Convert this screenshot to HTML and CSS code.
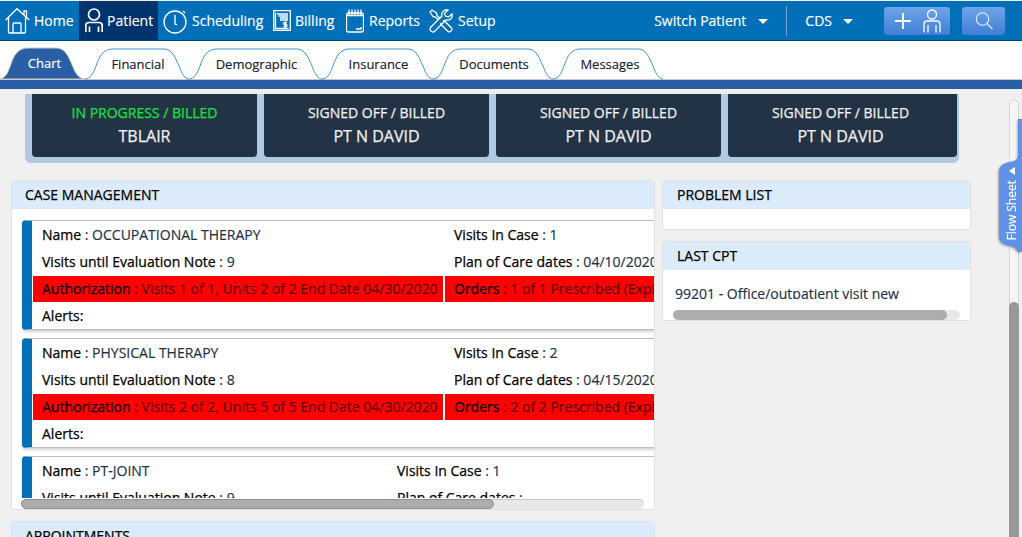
FILE: index.html
```html
<!DOCTYPE html>
<html lang="en">
<head>
<meta charset="utf-8">
<title>Patient Chart</title>
<link rel="stylesheet" href="styles.css">
</head>
<body>
<header class="topbar">
  <nav class="nav">
    <a class="nav-item nav-home">
      <svg class="ico" width="25" height="26" viewBox="0 0 25 26"><path d="M.7 12 12 .7 24.300 12M3.500 9.500V24q0 1 1 1H19.500q1 0 1-1V9.500M8 25V16q0-1 1-1h6q1 0 1 1v9M19 7V3h2.500v6.500"/></svg>
      <span>Home</span>
    </a>
    <a class="nav-item nav-patient active">
      <svg class="ico ico-bold" width="18" height="25" viewBox="0 0 18 25"><circle cx="9" cy="6.500" r="5.500"/><path d="M.8 24V17.500Q.8 14.500 4 14.500H14Q17.200 14.500 17.200 17.500V24M4.500 18.500V24M13.500 18.500V24"/></svg>
      <span>Patient</span>
    </a>
    <a class="nav-item nav-sched">
      <svg class="ico" width="24" height="26" viewBox="0 0 24 26"><circle cx="12" cy="14" r="11"/><path d="M12 7v9l2 1M20 3l2 2"/></svg>
      <span>Scheduling</span>
    </a>
    <a class="nav-item nav-bill">
      <svg class="ico" width="18" height="21" viewBox="0 0 18 21"><path d="M.7.7h16.600v19.600H.7zM2.500 2.500v16h13M4 4h11M5.500 6h9.500M7 8h8M7 10h8M14 12.500h-2.500q-1 0-1 1t1 1h1.500q1 0 1 1t-1 1h-2.500M12.500 11.500v6.500"/></svg>
      <span>Billing</span>
    </a>
    <a class="nav-item nav-rep">
      <svg class="ico" width="18" height="24" viewBox="0 0 18 24"><path d="M2.500 4H15.500q2 0 2 2v15q0 2-2 2H2.500q-2 0-2-2V6q0-2 2-2zM3 .5V6M6 .5V6M9 .5V6M12 .5V6M15 .5V6M.5 6.500h17M10 20h5V18"/></svg>
      <span>Reports</span>
    </a>
    <a class="nav-item nav-setup">
      <svg class="ico" width="24" height="24" viewBox="0 0 24 24"><path d="M9.500 11 6.500 8 4 7.500 1 3 3 1 7.500 4 8 6.500l3 3M14 12.500l1-1 7.500 7.500q1 1.500-.5 3t-3 .5L11.500 15l1-1"/><path d="M23 5l-3.500 3-3-1-1-2.500L19 1c-3.500-1-7 2-6 6L1.500 18.500q-1 1.500 0 3l1 1q1.500 1 3 0L17 11c4 1 7-2 6-6z"/></svg>
      <span>Setup</span>
    </a>
  </nav>
  <div class="actions">
    <a class="drop drop-switch">Switch Patient<i class="caret"></i></a>
    <i class="vsep"></i>
    <a class="drop drop-cds">CDS<i class="caret"></i></a>
    <button class="tool tool-add">
      <svg class="ico" width="18" height="18" viewBox="0 0 18 18"><path class="thick" d="M9 1v16M1 9h16"/></svg>
      <svg class="ico" width="18" height="24" viewBox="0 0 18 24"><circle cx="9" cy="5.500" r="4.500"/><path d="M1 23.500V15q0-3 3-3h10q3 0 3 3v8.500M5 16v7.500M13 16v7.500"/></svg>
    </button>
    <button class="tool tool-search">
      <svg class="ico ico-thin" width="20" height="20" viewBox="0 0 20 20"><circle cx="8.500" cy="8" r="6.200"/><path d="m13 12.500 5.500 5.500"/></svg>
    </button>
  </div>
</header>

<div class="tabs">
  <a class="tab tab-chart active">
    <svg class="tab-shape" width="85" height="31" viewBox="0 0 85 31"><path d="M0 31C6 30 8 24 11 16 14 7 18 0 28 0H56C66 0 69 10 73 19 76 27 80 31 85 31Z"/></svg>
    <span>Chart</span>
  </a>
  <a class="tab tab-fin">
    <svg class="tab-shape" width="104" height="30" viewBox="0 0 104 30"><path d="M0 30C5 30 8 25 11 17 14 8 18 0 27 0H79C87 0 90 8 94 17 97 25 100 30 104 30"/></svg>
    <span>Financial</span>
  </a>
  <a class="tab tab-demo">
    <svg class="tab-shape" width="133" height="30" viewBox="0 0 133 30"><path d="M0 30C5 30 8 25 11 17 14 8 18 0 27 0H108C116 0 119 8 123 17 126 25 129 30 133 30"/></svg>
    <span>Demographic</span>
  </a>
  <a class="tab tab-ins">
    <svg class="tab-shape" width="111" height="30" viewBox="0 0 111 30"><path d="M0 30C5 30 8 25 11 17 14 8 18 0 27 0H86C94 0 97 8 101 17 104 25 107 30 111 30"/></svg>
    <span>Insurance</span>
  </a>
  <a class="tab tab-doc">
    <svg class="tab-shape" width="120" height="30" viewBox="0 0 120 30"><path d="M0 30C5 30 8 25 11 17 14 8 18 0 27 0H95C103 0 106 8 110 17 113 25 116 30 120 30"/></svg>
    <span>Documents</span>
  </a>
  <a class="tab tab-msg">
    <svg class="tab-shape" width="110" height="30" viewBox="0 0 110 30"><path d="M0 30C5 30 8 25 11 17 14 8 18 0 27 0H85C93 0 96 8 100 17 103 25 106 30 110 30"/></svg>
    <span>Messages</span>
  </a>
</div>
<div class="tab-band"></div>

<div class="workspace">
  <main class="main">
    <section class="encounters">
      <article class="enc enc-first">
        <div class="enc-status enc-green">IN PROGRESS / BILLED</div>
        <div class="enc-name">TBLAIR</div>
      </article>
      <article class="enc">
        <div class="enc-status">SIGNED OFF / BILLED</div>
        <div class="enc-name">PT N DAVID</div>
      </article>
      <article class="enc">
        <div class="enc-status">SIGNED OFF / BILLED</div>
        <div class="enc-name">PT N DAVID</div>
      </article>
      <article class="enc enc-last">
        <div class="enc-status">SIGNED OFF / BILLED</div>
        <div class="enc-name">PT N DAVID</div>
      </article>
    </section>

    <div class="columns">
      <div class="col-left">
        <section class="panel panel-case">
          <h2 class="panel-head">CASE MANAGEMENT</h2>
          <div class="case-scroll">
            <div class="case-card">
              <div class="case-grid">
                <div class="cell"><b>Name</b> : OCCUPATIONAL THERAPY</div>
                <div class="cell"><b>Visits In Case</b> : 1</div>
                <div class="cell"><b>Visits until Evaluation Note</b> : 9</div>
                <div class="cell"><b>Plan of Care dates</b> : 04/10/2020 - 05/10/2020</div>
                <div class="cell cell-red"><b>Authorization</b> : Visits 1 of 1, Units 2 of 2 End Date 04/30/2020</div>
                <div class="cell cell-red"><b>Orders</b> : 1 of 1 Prescribed (Expires 05/10/2020)</div>
                <div class="cell"><b>Alerts:</b></div>
                <div class="cell"></div>
              </div>
            </div>
            <div class="case-card">
              <div class="case-grid">
                <div class="cell"><b>Name</b> : PHYSICAL THERAPY</div>
                <div class="cell"><b>Visits In Case</b> : 2</div>
                <div class="cell"><b>Visits until Evaluation Note</b> : 8</div>
                <div class="cell"><b>Plan of Care dates</b> : 04/15/2020 - 05/15/2020</div>
                <div class="cell cell-red"><b>Authorization</b> : Visits 2 of 2, Units 5 of 5 End Date 04/30/2020</div>
                <div class="cell cell-red"><b>Orders</b> : 2 of 2 Prescribed (Expires 05/15/2020)</div>
                <div class="cell"><b>Alerts:</b></div>
                <div class="cell"></div>
              </div>
            </div>
            <div class="case-card">
              <div class="case-grid case-grid-short">
                <div class="cell"><b>Name</b> : PT-JOINT</div>
                <div class="cell"><b>Visits In Case</b> : 1</div>
                <div class="cell"><b>Visits until Evaluation Note</b> : 9</div>
                <div class="cell"><b>Plan of Care dates</b> :</div>
              </div>
            </div>
          </div>
          <div class="hscroll hscroll-case"><i class="hthumb"></i></div>
        </section>
        <section class="panel panel-appt">
          <h2 class="panel-head">APPOINTMENTS</h2>
        </section>
      </div>

      <div class="col-right">
        <section class="panel panel-problem">
          <h2 class="panel-head panel-head-wide">PROBLEM LIST</h2>
        </section>
        <section class="panel panel-cpt">
          <h2 class="panel-head panel-head-wide">LAST CPT</h2>
          <div class="cpt-body"><div class="cpt-text">99201 - Office/outpatient visit new</div></div>
          <div class="hscroll hscroll-cpt"><i class="hthumb"></i></div>
        </section>
      </div>
    </div>
  </main>
  <aside class="rail"><div class="rail-track"><i class="rail-thumb"></i></div></aside>
  <a class="flow-tab">
    <svg class="flow-shape" width="24" height="133" viewBox="0 0 24 133"><path d="M24 0H20V36C20 41 17 42 12 43 5 44 1 47 1 53V117C1 123 5 126 12 127 17 128 19 131 20 133H24Z"/></svg>
    <i class="flow-arrow"></i>
    <span>Flow Sheet</span>
  </a>
</div>
</body>
</html>
```
FILE: styles.css
```css
* { box-sizing: border-box; }
html, body { margin: 0; height: 100%; overflow: hidden; }
body {
  width: 1022px;
  height: 537px;
  background: #f0f0f0;
  font-family: "Open Sans", "Liberation Sans", sans-serif;
  display: flex;
  flex-direction: column;
  color: #10202f;
  -webkit-text-stroke-width: .15px;
}
a { color: inherit; text-decoration: none; }

.ico { fill: none; stroke: #fff; stroke-width: 1.3; flex: none; display: block; }
.ico-bold { stroke-width: 1.7; }
.ico-thin { stroke-width: 1.1; stroke: #e6effb; }
.thick { stroke-width: 2; }

/* top bar */
.topbar {
  flex: none;
  height: 40px;
  margin-top: 1px;
  background: #0270b9;
  border-bottom: 1px solid #04406e;
  display: flex;
  justify-content: space-between;
  color: #fff;
  font-size: 14px;
}
.nav { display: flex; }
.nav-item { display: flex; align-items: center; height: 39px; }
.nav-home { width: 79px; padding-left: 5px; gap: 4px; }
.nav-patient { width: 79px; padding-left: 6px; gap: 4px; }
.nav-patient.active { background: #01346f; }
.nav-sched { width: 110px; padding-left: 5px; gap: 5px; }
.nav-bill { width: 73px; padding-left: 5px; gap: 4px; }
.nav-rep { width: 83px; padding-left: 5px; gap: 5px; }
.nav-setup { padding-left: 5px; gap: 5px; }

.actions { display: flex; align-items: center; height: 39px; padding-right: 17px; }
.drop { display: flex; align-items: center; }
.drop-switch { gap: 12px; }
.drop-cds { gap: 11px; margin-left: 18px; margin-right: 31px; }
.caret {
  width: 0; height: 0;
  border-left: 5px solid transparent;
  border-right: 5px solid transparent;
  border-top: 5px solid #fff;
  margin-top: 1px;
}
.vsep { width: 1px; height: 30px; background: #6fa8d6; margin-left: 18px; }
.tool {
  height: 28px;
  border: 0;
  border-radius: 3px;
  background: linear-gradient(#6ea4e8, #3f7fd6);
  display: flex;
  align-items: center;
  justify-content: center;
  padding: 0;
}
.tool-add { width: 66px; gap: 11px; margin-right: 12px; }
.tool-search { width: 43px; }

/* tabs */
.tabs {
  flex: none;
  height: 38px;
  background: #fff;
  display: flex;
  align-items: flex-end;
  font-size: 13px;
}
.tab {
  position: relative;
  height: 31px;
  display: flex;
  align-items: flex-start;
  justify-content: center;
  padding: 7px 0 0 2px;
}
.tab span { position: relative; }
.tab-shape { position: absolute; left: 0; bottom: 0; overflow: visible; fill: none; stroke: #3f93d3; stroke-width: 1; }
.tab-chart { width: 85px; color: #fff; padding: 6px 0 0 4px; }
.tab-chart .tab-shape { fill: #2a5fa5; stroke: #c9c9c9; }
.tab-fin { width: 104px; }
.tab-demo { width: 133px; }
.tab-ins { width: 111px; }
.tab-doc { width: 120px; }
.tab-msg { width: 110px; padding-left: 4px; }
.tab-band {
  flex: none;
  height: 10px;
  background: #2a5fa5;
  border-top: 1px solid #c9c9c9;
}

/* workspace */
.workspace {
  flex: 1;
  min-height: 0;
  position: relative;
  display: flex;
  overflow: hidden;
}
.main { flex: 1; min-width: 0; padding: 5px 0 0 11px; }

.encounters {
  margin: 0 0 0 14px;
  width: 934px;
  height: 69px;
  background: #b0c8e0;
  border-radius: 0 0 6px 6px;
  padding: 0 2px 6px 7px;
  display: flex;
  gap: 7px;
}
.enc {
  width: 225px;
  height: 63px;
  background: #233346;
  border-radius: 0 0 4px 4px;
  color: #f0f0f0;
  text-align: center;
  padding-top: 9px;
  -webkit-text-stroke-width: .25px;
}
.enc-last { width: 229px; padding-right: 4px; }
.enc-status { font-size: 14px; line-height: 20px; }
.enc-green { color: #17e03c; }
.enc-name { font-size: 16px; line-height: 26px; font-weight: 400; }

.columns { display: flex; gap: 7px; margin-top: 17px; align-items: flex-start; }
.col-left { width: 644px; }
.col-right { width: 309px; }

.panel {
  background: #fff;
  border: 1px solid #e2e2e2;
  border-radius: 3px;
  overflow: hidden;
}
.panel-head {
  margin: 0;
  height: 28px;
  background: #dcebfb;
  color: #000;
  font-size: 14px;
  font-weight: 400;
  line-height: 28px;
  padding-left: 13px;
  -webkit-text-stroke-width: .25px;
}
.panel-head-wide { padding-left: 14px; }
.panel-case { position: relative; height: 330px; }
.panel-appt { margin-top: 11px; height: 60px; }
.panel-problem { height: 50px; }
.panel-cpt { margin-top: 11px; height: 80px; position: relative; }

.case-scroll { padding: 11px 0 0 10px; height: 289px; overflow: hidden; }
.case-card {
  width: 820px;
  height: 110px;
  background: #fff;
  border: 1px solid #bdbdbd;
  border-left: 10px solid #0270b9;
  border-right: 0;
  border-radius: 4px 0 0 4px;
  box-shadow: 0 2px 3px rgba(0, 0, 0, .18);
  margin-bottom: 8px;
}
.case-grid {
  display: grid;
  grid-template-columns: 410px 1fr;
  column-gap: 2px;
  padding-left: 1px;
}
.case-grid-short { grid-template-columns: 353px 1fr; }
.cell {
  height: 27px;
  font-size: 14px;
  line-height: 28px;
  padding-left: 9px;
  white-space: nowrap;
  color: #1c2f45;
}
.cell b { font-weight: 400; color: #000; -webkit-text-stroke-width: .25px; }
.cell-red { background: #ff0000; color: #5a0008; height: 26px; margin-top: 1px; line-height: 26px; }

.hscroll { position: absolute; height: 10px; background: #e8e8e8; border-radius: 5px; }
.hthumb { display: block; height: 100%; background: #adadad; border-radius: 5px; }
.hscroll-case { left: 9px; bottom: 0; width: 623px; box-shadow: inset 0 1px 0 #c8c8c8; }
.hscroll-case .hthumb { width: 473px; border: 1px solid #8f8f8f; }
.cpt-body { height: 29px; overflow: hidden; padding: 14px 0 0 12px; }
.cpt-text { font-size: 14px; line-height: 20px; white-space: nowrap; color: #1c2f45; }
.hscroll-cpt { left: 10px; bottom: 0; width: 287px; }
.hscroll-cpt .hthumb { width: 274px; }

/* page rail */
.rail { flex: none; width: 13px; padding-top: 10px; }
.rail-track {
  width: 10px;
  height: 100%;
  background: #f5f5f5;
  border: 1px solid #d6d6d6;
  border-radius: 5px 5px 0 0;
  padding-top: 202px;
}
.rail-thumb { display: block; height: 260px; background: #999; border-radius: 5px; margin: 0 -1px; }

.flow-tab {
  position: absolute;
  right: 0;
  top: 30px;
  width: 24px;
  height: 133px;
  color: #fff;
  font-size: 12px;
  line-height: 14px;
  display: flex;
  flex-direction: column;
  align-items: center;
  padding: 48px 0 0 4px;
  gap: 5px;
}
.flow-shape { position: absolute; left: 0; top: 0; fill: #5f92e6; filter: drop-shadow(-1px 1px 1px rgba(0, 0, 0, .3)); }
.flow-tab span { position: relative; writing-mode: vertical-rl; transform: rotate(180deg); }
.flow-arrow {
  position: relative;
  width: 0; height: 0;
  border-top: 4px solid transparent;
  border-bottom: 4px solid transparent;
  border-right: 6px solid #fff;
}
```
